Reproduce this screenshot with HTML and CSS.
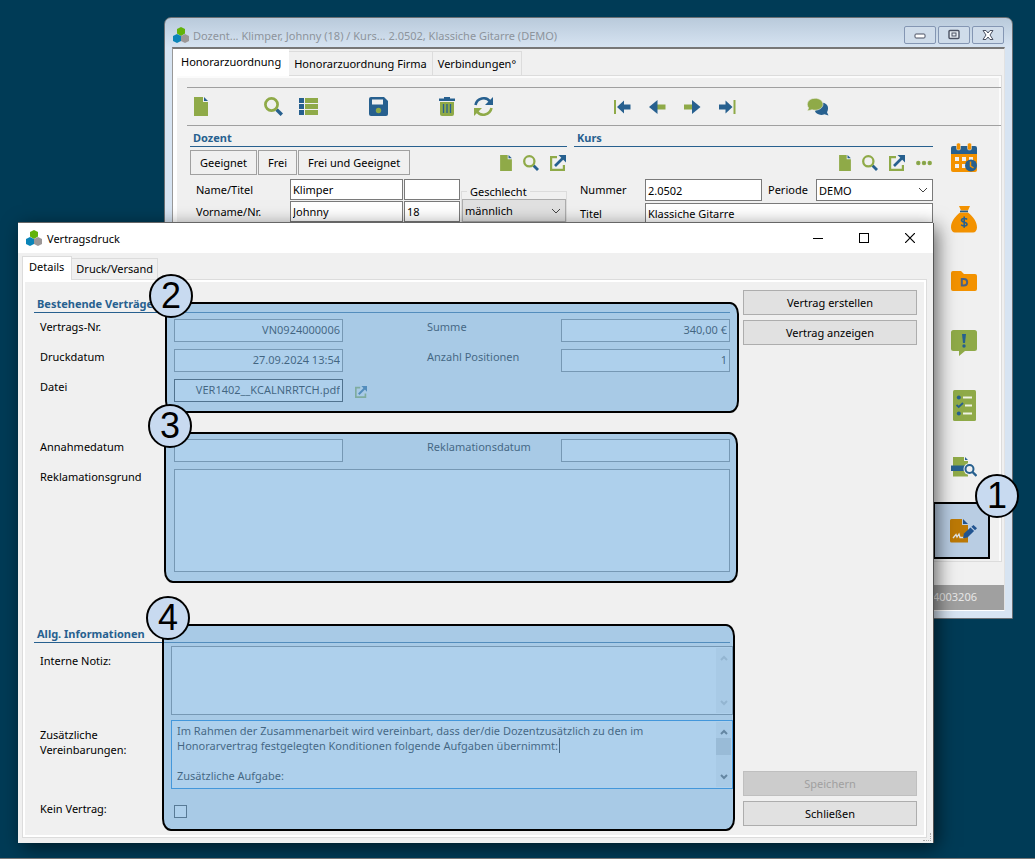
FILE: index.html
```html
<!DOCTYPE html>
<html lang="de">
<head>
    <meta charset="UTF-8">
    <meta name="viewport" content="width=device-width, initial-scale=1.0">
    <title>Vertragsdruck</title>
    <link rel="stylesheet" href="styles.css">
</head>
<body>

<!-- Shared icons -->
<svg class="defs" aria-hidden="true">
    <symbol id="logo" viewBox="0 0 16 16">
        <path fill="#62b30a" d="M8 0l4 2v4.500L8 9 4 6.500V2z"/>
        <path fill="#0a84b8" d="M4 7l4 2v5l-4 2-4-2V9z"/>
        <path fill="#9b9797" d="M12 7l4 2v5l-4 2-4-2V9z"/>
    </symbol>
    <symbol id="doc" viewBox="0 0 14 19">
        <path fill="#8faa48" d="M0 0h9v5h5v14H0z"/>
        <path fill="#27608f" d="M10 0l4 4h-4z"/>
    </symbol>
    <symbol id="search" viewBox="0 0 19 19">
        <path stroke="#27608f" stroke-width="3.400" d="M12.500 12.500l5.300 5.300"/>
        <circle cx="7.500" cy="7.500" r="6.100" fill="none" stroke="#8faa48" stroke-width="2.700"/>
    </symbol>
    <symbol id="open" viewBox="0 0 16 16">
        <path fill="none" stroke="#8faa48" stroke-width="2.200" d="M7 2.100H1.100v12.800h12.800V10"/>
        <path stroke="#27608f" stroke-width="2.600" d="M5 11l8-8"/>
        <path fill="#27608f" d="M8.500 0H16v7.500z"/>
    </symbol>
    <symbol id="arrow-up" viewBox="0 0 8 6">
        <path fill="none" stroke="currentColor" stroke-width="2" d="M1 5l3-3 3 3"/>
    </symbol>
    <symbol id="arrow-down" viewBox="0 0 8 6">
        <path fill="none" stroke="currentColor" stroke-width="2" d="M1 1l3 3 3-3"/>
    </symbol>
</svg>

<div class="desktop">

    <!-- Background window -->
    <section class="window window-back">
        <header class="back-title">
            <svg class="logo"><use href="#logo"/></svg>
            <span class="title">Dozent... Klimper, Johnny (18) / Kurs... 2.0502, Klassiche Gitarre (DEMO)</span>
            <button class="frame-btn" aria-label="Minimieren"><svg width="12" height="12" viewBox="0 0 12 12"><rect x="1" y="5" width="10" height="4" rx="1" fill="#fff" stroke="#4a5162"/></svg></button>
            <button class="frame-btn" aria-label="Maximieren"><svg width="12" height="12" viewBox="0 0 12 12"><rect x="1" y="1.500" width="10" height="8" rx="1" fill="#e8eef5" stroke="#4a5162" stroke-width="1.400"/><rect x="4" y="4" width="4" height="3" fill="none" stroke="#4a5162"/></svg></button>
            <button class="frame-btn" aria-label="Schließen"><svg width="12" height="12" viewBox="0 0 12 12"><path fill="#fff" stroke="#4a5162" d="M1 1.500h3l2 2.500 2-2.500h3L8 6l3 4.500H8L6 8l-2 2.500H1L4 6z"/></svg></button>
        </header>
        <div class="back-client">
            <nav class="tabs back-tabs">
                <button class="tab active">Honorarzuordnung</button>
                <button class="tab">Honorarzuordnung Firma</button>
                <button class="tab">Verbindungen°</button>
            </nav>
            <div class="back-panel">
                <div class="toolbar">
                    <div class="tools">
                        <button class="tool" aria-label="Neu"><svg width="14" height="19"><use href="#doc"/></svg></button>
                    </div>
                    <div class="tools">
                        <button class="tool" aria-label="Suchen"><svg width="19" height="19"><use href="#search"/></svg></button>
                        <button class="tool" aria-label="Liste"><svg width="19" height="19" viewBox="0 0 19 19"><path fill="#27608f" d="M0 1h5v5H0zM0 7h5v5H0zM0 13h5v5H0z"/><path fill="#8faa48" d="M6 1h13v5H6zM6 7h13v5H6zM6 13h13v5H6z"/></svg></button>
                    </div>
                    <div class="tools">
                        <button class="tool" aria-label="Speichern"><svg width="19" height="19" viewBox="0 0 19 19"><path fill="#27608f" d="M2 0h13l4 4v13q0 2-2 2H2q-2 0-2-2V2q0-2 2-2z"/><path fill="#f0f0f0" d="M3 2.500h11v5H3z"/><circle cx="9.500" cy="13.500" r="2.700" fill="#8faa48"/></svg></button>
                    </div>
                    <div class="tools">
                        <button class="tool" aria-label="Löschen"><svg width="16" height="19" viewBox="0 0 16 19"><path fill="#27608f" d="M0 1.500h5V0h6v1.500h5V4H0z"/><path fill="#8faa48" d="M1 5h14v12q0 2-2 2H3q-2 0-2-2z"/><path stroke="#27608f" stroke-width="1.300" d="M4.500 7v9M8 7v9M11.500 7v9"/></svg></button>
                        <button class="tool" aria-label="Aktualisieren"><svg width="19" height="19" viewBox="0 0 19 19"><path fill="none" stroke="#27608f" stroke-width="2.600" d="M1.500 8C3 1 12-1 16 4.500"/><path fill="#27608f" d="M19 0v8h-8z"/><path fill="none" stroke="#8faa48" stroke-width="2.600" d="M17.500 11C16 18 7 20 3 14.500"/><path fill="#8faa48" d="M0 19v-8h8z"/></svg></button>
                    </div>
                    <div class="tools tools-nav">
                        <button class="tool" aria-label="Erster"><svg width="17" height="16" viewBox="0 0 17 16"><path fill="#8faa48" d="M0 1h2v14H0z"/><path fill="#27608f" d="M3 8l7-6.500V5.500h6.500v5H10v4z"/></svg></button>
                        <button class="tool" aria-label="Zurück"><svg width="17" height="16" viewBox="0 0 17 16"><path fill="#8faa48" d="M8 5.500h8.500v5H8z"/><path fill="#27608f" d="M0 8l8.500-7v14z"/></svg></button>
                        <button class="tool" aria-label="Weiter"><svg width="17" height="16" viewBox="0 0 17 16"><path fill="#8faa48" d="M0 5.500h8.500v5H0z"/><path fill="#27608f" d="M16.500 8L8 1v14z"/></svg></button>
                        <button class="tool" aria-label="Letzter"><svg width="17" height="16" viewBox="0 0 17 16"><path fill="#8faa48" d="M14.500 1h2v14h-2z"/><path fill="#27608f" d="M13.500 8l-7-6.500V5.500H0v5h6.500v4z"/></svg></button>
                    </div>
                    <div class="tools tools-chat">
                        <button class="tool" aria-label="Nachrichten"><svg width="22" height="18" viewBox="0 0 22 18"><path fill="#27608f" d="M14 4.500c5 0 7.500 3 7 6.500q-.2 2-1 3.200l1.500 3.300-4-1.200c-4 1.500-8.500 0-9.500-3z"/><path fill="#8faa48" stroke="#f0f0f0" stroke-width=".6" d="M8 .3c4.500 0 8 2.600 8 5.900s-3.500 6-8 6q-1.500 0-3-.4L.3 12.900l1.300-3C-1.800 5.800 1.700.3 8 .3z"/></svg></button>
                    </div>
                </div>

                <div class="back-main">
                    <div class="back-forms">
                        <form class="back-section">
                            <h2>Dozent</h2>
                            <div class="action-row">
                                <button type="button" class="flat-btn">Geeignet</button>
                                <button type="button" class="flat-btn">Frei</button>
                                <button type="button" class="flat-btn">Frei und Geeignet</button>
                                <div class="row-icons">
                                    <button type="button" aria-label="Neuer Dozent"><svg width="12" height="16"><use href="#doc"/></svg></button>
                                    <button type="button" aria-label="Dozent suchen"><svg width="16" height="16"><use href="#search"/></svg></button>
                                    <button type="button" aria-label="Dozent öffnen"><svg width="16" height="16"><use href="#open"/></svg></button>
                                </div>
                            </div>
                            <div class="dozent-grid">
                                <label for="name">Name/Titel</label>
                                <input id="name" value="Klimper">
                                <input aria-label="Titel" value="">
                                <fieldset>
                                    <legend>Geschlecht</legend>
                                    <select aria-label="Geschlecht"><option>männlich</option></select>
                                </fieldset>
                                <label for="vorname">Vorname/Nr.</label>
                                <input id="vorname" value="Johnny">
                                <input aria-label="Nummer" value="18">
                            </div>
                        </form>
                        <form class="back-section">
                            <h2>Kurs</h2>
                            <div class="action-row">
                                <div class="row-icons">
                                    <button type="button" aria-label="Neuer Kurs"><svg width="12" height="16"><use href="#doc"/></svg></button>
                                    <button type="button" aria-label="Kurs suchen"><svg width="16" height="16"><use href="#search"/></svg></button>
                                    <button type="button" aria-label="Kurs öffnen"><svg width="16" height="16"><use href="#open"/></svg></button>
                                    <button type="button" aria-label="Mehr"><svg width="16" height="16" viewBox="0 0 16 16"><g fill="#6b9366" stroke="#8faa48" stroke-width="1.500"><circle cx="2.300" cy="8" r="1.500"/><circle cx="8" cy="8" r="1.500"/><circle cx="13.700" cy="8" r="1.500"/></g></svg></button>
                                </div>
                            </div>
                            <div class="kurs-grid">
                                <label for="nummer">Nummer</label>
                                <input id="nummer" value="2.0502">
                                <label for="periode">Periode</label>
                                <select id="periode"><option>DEMO</option></select>
                                <label for="titel">Titel</label>
                                <input id="titel" class="span" value="Klassiche Gitarre">
                            </div>
                        </form>
                    </div>

                    <nav class="side">
                        <button aria-label="Termine"><svg width="26" height="29" viewBox="0 0 26 29"><path fill="#f39200" d="M0 11h26v16q0 2-2 2H2q-2 0-2-2z"/><path fill="#27608f" d="M2 3h22q2 0 2 2v6H0V5q0-2 2-2z"/><g fill="#f39200" stroke="#f0f0f0" stroke-width=".5"><rect x="5.500" y="0" width="4" height="7" rx="1.500"/><rect x="16.500" y="0" width="4" height="7" rx="1.500"/></g><path fill="#f0f0f0" d="M4 14h4v4H4zM11 14h4v4h-4zM18 14h4v4h-4zM4 21h4v4H4zM11 21h4v4h-4z"/><circle cx="20" cy="22.500" r="6" fill="#27608f"/><path fill="none" stroke="#f39200" stroke-width="1.500" d="M19.500 18.500v4.500l3 2"/></svg></button>
                        <button aria-label="Honorar"><svg width="26" height="27" viewBox="0 0 26 27"><path fill="#f39200" d="M8 0h11l-2 4.500H10zM9 6.500h8c5 4 9 9 9 15 0 3-2 5-4 5H4c-2 0-4-2-4-5 0-6 4-11 9-15z"/><path fill="#27608f" d="M9 4.600h8v1.600H9z"/><path fill="none" stroke="#27608f" stroke-width="1.600" d="M16 13.500c-1-1.500-5.500-1.500-5.500.8 0 2.500 5.500 1.300 5.500 3.900 0 2.300-4.700 2.300-5.800.5M13.200 10.500v11.300"/></svg></button>
                        <button aria-label="Dokumente"><svg width="26" height="20" viewBox="0 0 26 20"><path fill="#f39200" d="M2 0h8l3 3h11q2 0 2 2v13q0 2-2 2H2q-2 0-2-2V2q0-2 2-2z"/><path fill="none" stroke="#4a6285" stroke-width="2" d="M10.800 8h2c4.500 0 4.500 6.500 0 6.500h-2z"/></svg></button>
                        <button aria-label="Hinweise"><svg width="26" height="26" viewBox="0 0 26 26"><path fill="#8faa48" d="M2.500 0h21Q26 0 26 2.500v16q0 2.500-2.500 2.500H14l-6 5v-5H2.500Q0 21 0 18.500v-16Q0 0 2.500 0z"/><path fill="#27608f" d="M11 4h4l-1 9h-2z"/><circle cx="13" cy="16" r="1.700" fill="#27608f"/></svg></button>
                        <button aria-label="Checkliste"><svg width="23" height="31" viewBox="0 0 23 31"><rect width="23" height="31" rx="1.500" fill="#8faa48"/><circle cx="5.800" cy="7.500" r="2" fill="#27608f"/><circle cx="5.800" cy="23.500" r="2" fill="#27608f"/><path fill="none" stroke="#27608f" stroke-width="1.800" d="M3.500 15l2.200 2 4.300-4"/><path stroke="#eef2e2" stroke-width="1.800" d="M10 7.500h9M12 15.500h7M10 23.500h9"/></svg></button>
                        <button aria-label="Druckvorschau"><svg width="26" height="20" viewBox="0 0 26 20"><path fill="#8faa48" d="M2 0h11v4h4v15.500H2z"/><path fill="#27608f" d="M14 0l3 3h-3zM0 8.500h15v5.500H0z"/><circle cx="18.500" cy="12" r="6" fill="#f0f0f0"/><circle cx="18.500" cy="12" r="4" fill="#f0f0f0" stroke="#27608f" stroke-width="2"/><path stroke="#27608f" stroke-width="2.400" d="M21.500 15l4 4"/></svg></button>
                        <div class="side-marked">
                            <button aria-label="Vertrag"><svg width="27" height="24" viewBox="0 0 27 24"><path fill="#bc7906" d="M1.500 0H12v6h6v17.500H1.500Q0 23.500 0 22V1.500Q0 0 1.500 0z"/><path fill="#225490" d="M13 0l5 5h-5z"/><path fill="none" stroke="#dfe3e6" stroke-width="1.300" d="M3 19l3-3.500 1 2.500 2-3 1 3.500h4"/><path fill="#225490" d="M13 19.300l1-4.800 6.500-6 3.600 3.600-6.600 6.300z"/><path fill="#225490" d="M21.400 7.700L23.500 6 27 9.300l-2 2z"/></svg></button>
                            <span class="marker marker-1">1</span>
                        </div>
                    </nav>
                </div>
            </div>
            <footer class="status">4003206</footer>
        </div>
    </section>

    <!-- Dialog -->
    <section class="window dialog">
        <header class="dialog-title">
            <svg class="logo"><use href="#logo"/></svg>
            <span class="title">Vertragsdruck</span>
            <button aria-label="Minimieren"><svg width="10" height="10"><path stroke="#000" d="M0 5.500h10"/></svg></button>
            <button aria-label="Maximieren"><svg width="10" height="10"><rect x=".5" y=".5" width="9" height="9" fill="none" stroke="#000"/></svg></button>
            <button aria-label="Schließen"><svg width="10" height="10"><path stroke="#000" stroke-width="1.200" d="M0 0l10 10M10 0L0 10"/></svg></button>
        </header>
        <nav class="tabs">
            <button class="tab active">Details</button>
            <button class="tab">Druck/Versand</button>
        </nav>
        <form class="panel">
            <div class="main">
                <section class="group">
                    <h2>Bestehende Verträge</h2>
                    <div class="fields">
                        <label for="vertragsnr">Vertrags-Nr.</label>
                        <input id="vertragsnr" value="VN0924000006">
                        <label for="summe" class="second">Summe</label>
                        <input id="summe" value="340,00 €">

                        <label for="druckdatum">Druckdatum</label>
                        <input id="druckdatum" value="27.09.2024 13:54">
                        <label for="positionen" class="second">Anzahl Positionen</label>
                        <input id="positionen" value="1">

                        <label for="datei">Datei</label>
                        <input id="datei" class="dark" value="VER1402__KCALNRRTCH.pdf">
                        <button type="button" class="open-file" aria-label="Datei öffnen"><svg width="12" height="12"><use href="#open"/></svg></button>
                    </div>
                    <div class="callout callout-2"><span class="marker">2</span></div>
                </section>

                <section class="group group-claims">
                    <div class="fields">
                        <label for="annahme">Annahmedatum</label>
                        <input id="annahme">
                        <label for="reklamation" class="second">Reklamationsdatum</label>
                        <input id="reklamation">

                        <label for="grund">Reklamationsgrund</label>
                        <textarea id="grund" class="reason"></textarea>
                    </div>
                    <div class="callout callout-3"><span class="marker">3</span></div>
                </section>

                <section class="group group-info">
                    <h2>Allg. Informationen</h2>
                    <div class="notes">
                        <label for="notiz">Interne Notiz:</label>
                        <div class="memo">
                            <textarea id="notiz"></textarea>
                            <div class="scroll off">
                                <svg width="8" height="6"><use href="#arrow-up"/></svg>
                                <svg width="8" height="6"><use href="#arrow-down"/></svg>
                            </div>
                        </div>
                        <label for="zusatz">Zusätzliche Vereinbarungen:</label>
                        <div class="memo focused">
                            <textarea id="zusatz">Im Rahmen der Zusammenarbeit wird vereinbart, dass der/die Dozentzusätzlich zu den im
Honorarvertrag festgelegten Konditionen folgende Aufgaben übernimmt:

Zusätzliche Aufgabe:</textarea>
                            <span class="caret"></span>
                            <div class="scroll">
                                <svg width="8" height="6"><use href="#arrow-up"/></svg>
                                <span class="thumb"></span>
                                <svg width="8" height="6"><use href="#arrow-down"/></svg>
                            </div>
                        </div>
                        <label for="kein">Kein Vertrag:</label>
                        <input type="checkbox" id="kein">
                    </div>
                    <div class="callout callout-4"><span class="marker">4</span></div>
                </section>
            </div>

            <aside class="actions">
                <button type="button">Vertrag erstellen</button>
                <button type="button">Vertrag anzeigen</button>
                <button type="button" class="save" disabled>Speichern</button>
                <button type="button">Schließen</button>
            </aside>
        </form>
        <span class="grip"></span>
    </section>
</div>

</body>
</html>
```

FILE: styles.css
```css
* { box-sizing: border-box; }
body { margin: 0; font-family: "Noto Sans", "Open Sans", sans-serif; font-size: 11px; line-height: 15px; color: #000; }
button, input, select, textarea { font: inherit; color: inherit; margin: 0; border-radius: 0; }
button { padding: 0; border: none; background: none; }
svg { display: block; }
h2 { margin: 0; font-size: 11px; line-height: 16px; font-weight: bold; color: #27608f; border-bottom: 1px solid #27608f; padding-left: 3px; }
.defs { position: absolute; width: 0; height: 0; }
.logo { width: 16px; height: 16px; flex: none; }
.title { flex: 1; white-space: nowrap; }

.desktop { position: relative; min-height: 100vh; background-color: #003b56; border-bottom: 1px solid #777; overflow: hidden; }
.window { position: absolute; display: flex; flex-direction: column; }

/* inputs */
input, textarea, select { border: 1px solid #7a7a7a; background-color: #fff; padding: 0 2px; min-width: 0; width: 100%; outline: none; }
textarea { display: block; resize: none; overflow: hidden; }
select { appearance: none; background-repeat: no-repeat; background-position: right 4px center; background-image: url("data:image/svg+xml,%3Csvg xmlns='http://www.w3.org/2000/svg' width='10' height='6'%3E%3Cpath d='M1 1l4 4 4-4' fill='none' stroke='%23444'/%3E%3C/svg%3E"); }

/* tabs */
.tabs { display: flex; align-items: flex-end; padding: 3px 4px 0; }
.tab { height: 21px; padding: 0 4px 1px; white-space: nowrap; border: 1px solid #dcdcdc; border-bottom: none; border-left: none; background-color: #f0f0f0; }
.tab.active { position: relative; height: 24px; margin-bottom: -1px; padding: 0 7px 4px 6px; border-left: 1px solid #dcdcdc; background-color: #fff; }

/* background window */
.window-back { top: 17px; right: 22px; bottom: 239px; left: 164px; padding: 0 7px 7px; border: 1px solid #6b6f73; border-radius: 7px 7px 0 0; background: linear-gradient(#b9cadb, #d7e4f2 30px); }
.back-title { display: flex; align-items: center; gap: 4px; flex: none; height: 29px; padding: 5px 1px 0; color: #8d949c; }
.frame-btn { display: flex; align-items: center; justify-content: center; width: 32px; height: 18px; margin-left: -2px; border: 1px solid #8496b3; border-radius: 2px; background-color: #cfdcea; }
.back-client { flex: 1; min-height: 0; display: flex; flex-direction: column; border-top: 2px solid #777; border-left: 1px solid #999; border-right: 1px solid #e2e2e2; border-bottom: 1px solid #fff; background-color: #f0f0f0; }
.back-tabs { padding: 0; }
.back-tabs .tab { height: 24px; padding: 0 5px; }
.back-tabs .tab.active { height: 27px; padding: 0 8px 3px; border: none; }
.back-panel { flex: 1; min-height: 0; margin-right: 2px; padding: 11px 0 0 10px; border: 1px solid #dcdcdc; border-left: 4px solid #fff; box-shadow: inset -2px 2px #fbfbfb; }
.toolbar { display: flex; align-items: center; gap: 35px; height: 39px; padding-left: 7px; border-top: 1px solid #a0a0a0; border-bottom: 1px solid #a0a0a0; }
.tools { display: flex; }
.tool { width: 35px; }
.tools-nav { margin-left: 70px; }
.tools-chat { margin-left: 18px; }
.back-main { display: flex; padding-left: 3px; }
.back-forms { flex: 1; display: grid; grid-template-columns: 21fr 20fr; gap: 7px; padding-top: 4px; }
.action-row { display: flex; align-items: center; gap: 1px; height: 25px; margin: 3px 0 4px; }
.flat-btn { height: 25px; padding: 0 9px; border: 1px solid #a0a0a0; white-space: nowrap; }
.row-icons { display: flex; gap: 11px; margin-left: auto; padding-right: 1px; }
.dozent-grid { display: grid; grid-template-columns: 99px 1fr 56px 106px; grid-template-rows: 21px 21px; gap: 1px; }
.dozent-grid label, .kurs-grid label { padding: 3px 0 0 6px; }
.dozent-grid fieldset { grid-column: 4; grid-row: 1 / 3; margin: 5px 0 0; padding: 0; border: 1px solid #dcdcdc; min-width: 0; }
.dozent-grid legend { margin-left: 5px; padding: 0 3px; }
.dozent-grid select { height: 23px; border-color: #adadad; background-color: #e1e1e1; }
.kurs-grid { display: grid; grid-template-columns: 71px 1fr 54px 1fr; grid-template-rows: 22px 21px; row-gap: 2px; }
.kurs-grid .span { grid-column: 2 / 5; }
.side { width: 68px; padding-right: 6px; }
.side button { display: flex; align-items: center; justify-content: center; width: 100%; height: 62px; }
.side-marked { position: relative; width: 57px; height: 57px; margin-top: 4px; border: 2px solid #000; background-color: #b9cde3; }
.side-marked button { height: 100%; padding-left: 3px; }
.status { flex: none; height: 25px; margin-top: 23px; padding: 4px 27px 0 0; text-align: right; color: #e8e8e8; background-color: #a0a0a0; }

/* dialog */
.dialog { top: 223px; right: 102px; bottom: 15px; left: 18px; background-color: #f0f0f0; box-shadow: 0 -1px #666, 1px 0 #555, 4px 4px 18px rgba(0, 0, 0, 0.6); padding-bottom: 5px; }
.dialog-title { display: flex; align-items: center; flex: none; height: 30px; padding-left: 8px; background-color: #fff; }
.dialog-title .title { padding-left: 5px; }
.dialog-title button { display: flex; align-items: center; justify-content: center; width: 46px; height: 28px; }
.panel { flex: 1; display: flex; gap: 10px; margin: 0 6px 0 4px; padding: 10px 9px 11px 11px; border: 1px solid #dcdcdc; box-shadow: inset 0 0 0 2px #fff; }
.main { flex: 1; padding-top: 6px; }
.group { position: relative; }
.group h2 { margin-right: 3px; }
.group-claims { margin-top: 37px; }
.group-info { margin-top: 54px; }
.fields { display: grid; grid-template-columns: 134px 1fr 84px 134px 1fr; gap: 7px 0; margin-right: 3px; padding: 6px 0 0 6px; }
.group-claims .fields { padding-top: 0; }
.fields input { height: 23px; padding-bottom: 2px; text-align: right; }
.fields .second { grid-column: 4; }
.fields .dark { border-color: #222; }
.reason { grid-column: 2 / 6; height: 103px; }
.open-file { justify-self: start; margin: 3px 0 0 12px; }
.notes { display: grid; grid-template-columns: 131px 1fr; row-gap: 5px; padding: 3px 0 0 6px; }
.notes label { padding-top: 7px; }
.memo { position: relative; display: flex; height: 69px; padding: 1px; border: 1px solid #7a7a7a; background-color: #fff; }
.memo.focused { border-color: #0078d7; }
.memo textarea { border: none; padding: 1px 4px; white-space: pre; }
.scroll { display: flex; flex-direction: column; align-items: center; flex: none; width: 15px; padding: 7px 0; background-color: #f0f0f0; color: #505050; }
.scroll svg:last-child { margin-top: auto; }
.scroll.off { color: #bfbfbf; }
.thumb { width: 15px; height: 17px; margin-top: 3px; background-color: #cdcdcd; }
.caret { position: absolute; top: 17px; left: 387px; width: 1px; height: 15px; background-color: #000; }
#kein { appearance: none; width: 13px; height: 13px; margin: 11px 0 0 3px; padding: 0; border: 1px solid #333; }

.actions { display: flex; flex-direction: column; gap: 5px; width: 174px; }
.actions button { height: 25px; border: 1px solid #adadad; background-color: #e1e1e1; }
.actions .save { margin-top: auto; border-color: #bfbfbf; background-color: #ccc; color: #a0a0a0; }
.grip { position: absolute; right: 2px; bottom: 2px; width: 8px; height: 8px; border-right: 1px dotted #aaa; border-bottom: 1px dotted #aaa; }

/* numbered callouts */
.callout { position: absolute; border: 2px solid #000; border-radius: 9px / 12px; background-color: rgba(115, 174, 222, 0.58); pointer-events: none; }
.callout-2 { top: 6px; right: -6px; bottom: -11px; left: 131px; }
.callout-3 { top: -7px; right: -5px; bottom: -11px; left: 130px; }
.callout-4 { top: -2px; right: -2px; bottom: -13px; left: 128px; }
.marker { position: absolute; top: -30px; left: -18px; width: 44px; height: 44px; border: 2px solid #000; border-radius: 50%; background-color: #c8daf0; font-family: "Liberation Sans", Arial, sans-serif; font-size: 36px; line-height: 40px; text-align: center; }
.marker-1 { left: 40px; }
```
